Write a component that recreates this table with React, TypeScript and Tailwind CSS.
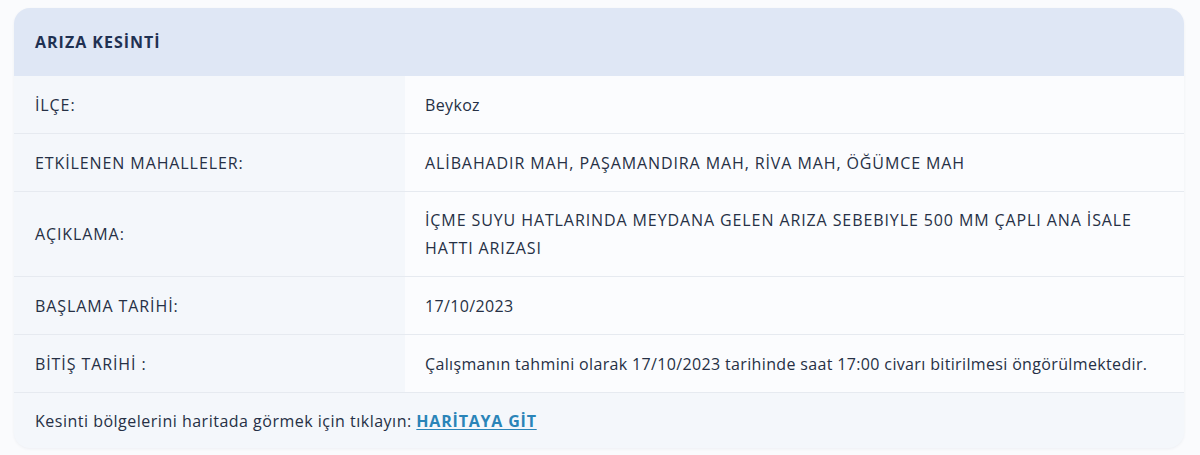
import React from 'react';

interface Row {
  label: string;
  value: string;
  caps?: boolean;
}

const rows: Row[] = [
  { label: 'İLÇE:', value: 'Beykoz' },
  { label: 'ETKİLENEN MAHALLELER:', value: 'ALİBAHADIR MAH, PAŞAMANDIRA MAH, RİVA MAH, ÖĞÜMCE MAH', caps: true },
  {
    label: 'AÇIKLAMA:',
    value: 'İÇME SUYU HATLARINDA MEYDANA GELEN ARIZA SEBEBIYLE 500 MM ÇAPLI ANA İSALE HATTI ARIZASI',
    caps: true,
  },
  { label: 'BAŞLAMA TARİHİ:', value: '17/10/2023' },
  {
    label: 'BİTİŞ TARİHİ :',
    value: 'Çalışmanın tahmini olarak 17/10/2023 tarihinde saat 17:00 civarı bitirilmesi öngörülmektedir.',
  },
];

const App: React.FC = () => {
  return (
    <div className="min-h-[455px] w-[1200px] bg-[#fafbfd] pt-2 pl-[14px] font-['Open_Sans','Liberation_Sans',sans-serif] text-[16px] tracking-[0.35px] text-[#263045]">
      <div className="w-[1170px] overflow-hidden rounded-2xl bg-[#f4f7fb] shadow-[0_1px_3px_rgba(30,50,90,0.06)]">
        {/* Header */}
        <div className="flex h-[68px] items-center bg-[#dfe7f5] px-[21px]">
          <h2 className="text-[16px] font-bold tracking-[1px] text-[#1f3152]">ARIZA KESİNTİ</h2>
        </div>

        {/* Rows */}
        {rows.map((row) => (
          <div key={row.label} className="flex min-h-[58px] border-b border-[#e6eaf0]">
            <div className="flex w-[391px] shrink-0 items-center bg-[#f4f7fb] px-[21px] leading-[28px] tracking-[0.9px]">
              {row.label}
            </div>
            <div className="flex flex-1 items-center bg-[#fbfcfe] py-[14px] pl-5 pr-[28px] leading-[28px]">
              <span className={row.caps ? 'tracking-[0.9px]' : ''}>{row.value}</span>
            </div>
          </div>
        ))}

        {/* Footer */}
        <div className="flex h-[55px] items-center px-[21px]">
          <span className="tracking-[0.5px]">
            Kesinti bölgelerini haritada görmek için tıklayın:{' '}
            <a href="#" className="font-bold tracking-[0.8px] text-[#2a84b8] underline underline-offset-2">
              HARİTAYA GİT
            </a>
          </span>
        </div>
      </div>
    </div>
  );
};

export default App;
